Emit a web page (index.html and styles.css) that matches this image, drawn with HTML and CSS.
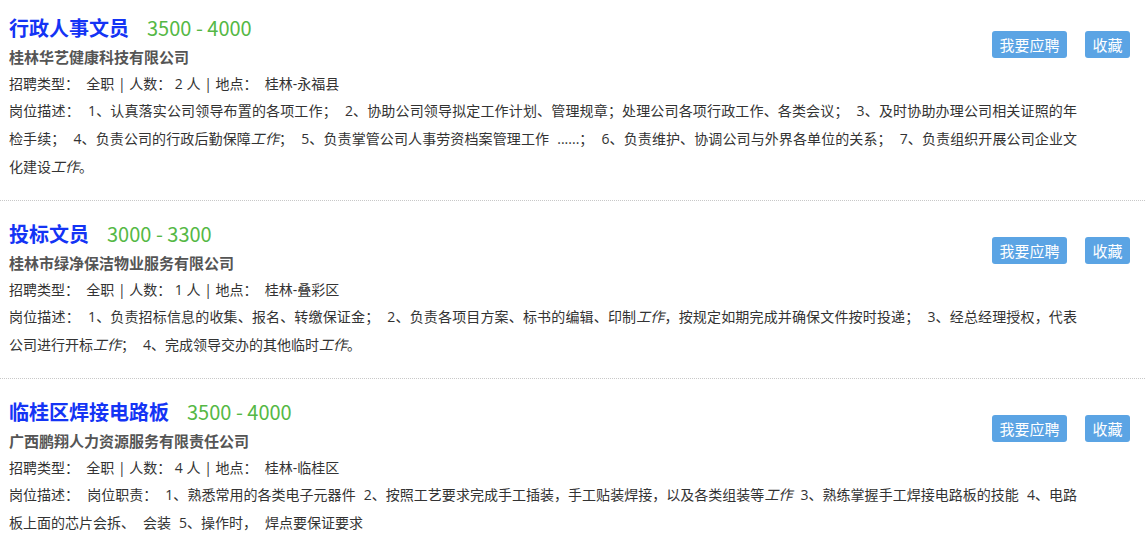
FILE: index.html
```html
<!DOCTYPE html>
<html lang="zh-CN">
<head>
<meta charset="utf-8">
<title>职位列表</title>
<link rel="stylesheet" href="styles.css">
</head>
<body>
<div class="job-list">
  <div class="job">
    <div class="job-head">
      <a class="job-title" href="#">行政人事文员</a>
      <span class="salary">3500 - 4000</span>
    </div>
    <div class="company">桂林华艺健康科技有限公司</div>
    <div class="meta">招聘类型：&nbsp; 全职 | 人数： 2 人 | 地点：&nbsp; 桂林-永福县</div>
    <div class="desc">岗位描述： 1、认真落实公司领导布置的各项工作； 2、协助公司领导拟定工作计划、管理规章；处理公司各项行政工作、各类会议； 3、及时协助办理公司相关证照的年检手续； 4、负责公司的行政后勤保障<em>工作</em>； 5、负责掌管公司人事劳资档案管理工作 ......； 6、负责维护、协调公司与外界各单位的关系； 7、负责组织开展公司企业文化建设<em>工作</em>。</div>
    <div class="actions">
      <a class="btn" href="#">我要应聘</a>
      <a class="btn" href="#">收藏</a>
    </div>
  </div>
  <div class="job">
    <div class="job-head">
      <a class="job-title" href="#">投标文员</a>
      <span class="salary">3000 - 3300</span>
    </div>
    <div class="company">桂林市绿净保洁物业服务有限公司</div>
    <div class="meta">招聘类型：&nbsp; 全职 | 人数： 1 人 | 地点：&nbsp; 桂林-叠彩区</div>
    <div class="desc">岗位描述： 1、负责招标信息的收集、报名、转缴保证金； 2、负责各项目方案、标书的编辑、印制<em>工作</em>，按规定如期完成并确保文件按时投递； 3、经总经理授权，代表公司进行开标<em>工作</em>； 4、完成领导交办的其他临时<em>工作</em>。</div>
    <div class="actions">
      <a class="btn" href="#">我要应聘</a>
      <a class="btn" href="#">收藏</a>
    </div>
  </div>
  <div class="job">
    <div class="job-head">
      <a class="job-title" href="#">临桂区焊接电路板</a>
      <span class="salary">3500 - 4000</span>
    </div>
    <div class="company">广西鹏翔人力资源服务有限责任公司</div>
    <div class="meta">招聘类型：&nbsp; 全职 | 人数： 4 人 | 地点：&nbsp; 桂林-临桂区</div>
    <div class="desc">岗位描述： 岗位职责： 1、熟悉常用的各类电子元器件 2、按照工艺要求完成手工插装，手工贴装焊接，以及各类组装等<em>工作</em> 3、熟练掌握手工焊接电路板的技能 4、电路板上面的芯片会拆、 会装 5、操作时， 焊点要保证要求</div>
    <div class="actions">
      <a class="btn" href="#">我要应聘</a>
      <a class="btn" href="#">收藏</a>
    </div>
  </div>
</div>
</body>
</html>
```
FILE: styles.css
```css
html, body {
  margin: 0;
  padding: 0;
  background: #fff;
}
body {
  font-family: "Open Sans", "Noto Sans CJK SC", sans-serif;
  font-size: 14px;
  color: #333;
}
.job-list {
  display: flex;
  flex-direction: column;
}
.job {
  position: relative;
  padding: 18px 68px 19px 9px;
  border-bottom: 1px dotted #c8c8c8;
}
.job:first-child {
  padding-top: 13px;
}
.job-head {
  display: flex;
  align-items: center;
  gap: 18px;
  height: 30px;
}
.job-title {
  font-family: "Noto Sans CJK SC", sans-serif;
  font-size: 20px;
  font-weight: bold;
  color: #1434f5;
  text-decoration: none;
  line-height: 30px;
}
.salary {
  font-family: "Noto Sans CJK SC", sans-serif;
  font-size: 20px;
  color: #55b845;
  line-height: 30px;
}
.company {
  font-family: "Noto Sans CJK SC", sans-serif;
  font-size: 15px;
  font-weight: bold;
  color: #555;
  line-height: 28px;
}
.meta {
  line-height: 26px;
}
.desc {
  line-height: 28px;
  text-align: justify;
  word-spacing: 4.4px;
}
.desc em {
  font-style: italic;
}
.actions {
  position: absolute;
  top: 36px;
  right: 15px;
  display: flex;
  gap: 18px;
}
.job:first-child .actions {
  top: 31px;
}
.btn {
  display: block;
  background: #5ba4e4;
  color: #fff;
  text-decoration: none;
  font-family: "Noto Sans CJK SC", sans-serif;
  font-size: 15px;
  line-height: 27px;
  height: 27px;
  padding: 0 7.5px;
  border-radius: 3px;
}
```
